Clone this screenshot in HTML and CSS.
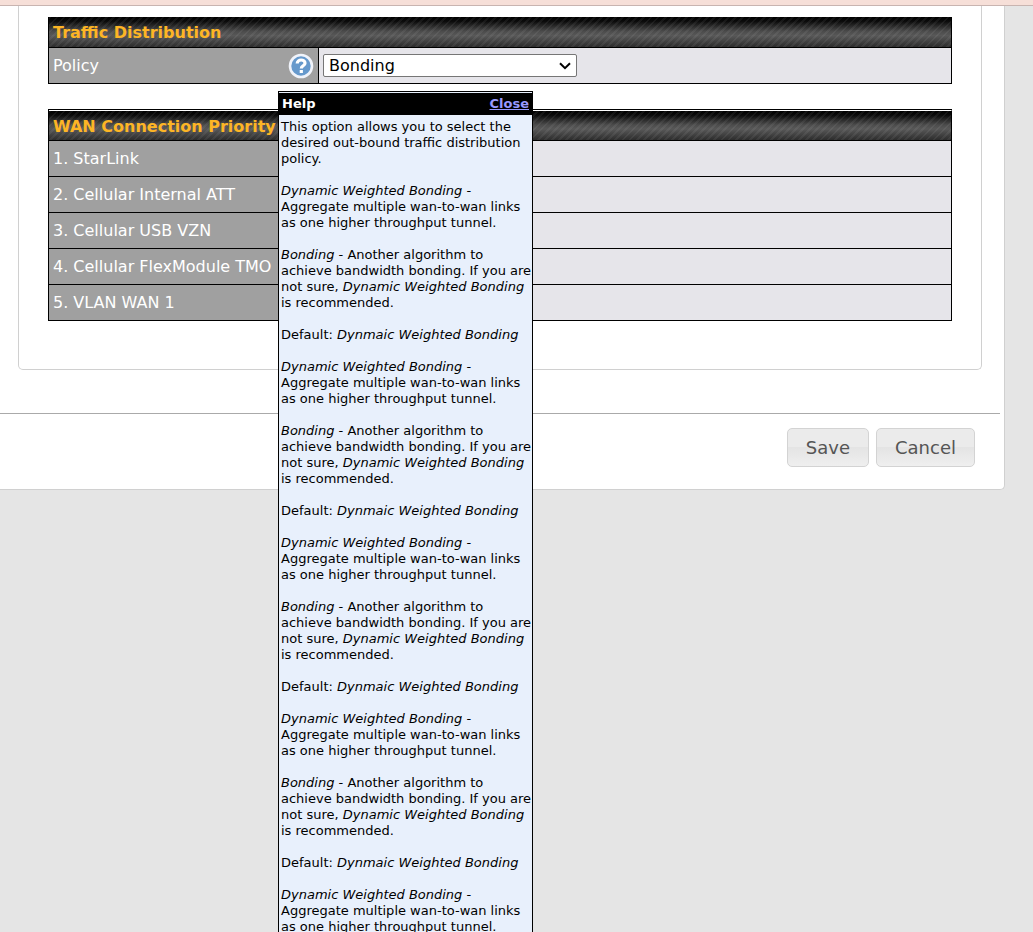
FILE: index.html
```html
<!DOCTYPE html>
<html lang="en">
  <head>
    <meta charset="UTF-8" />
    <meta name="viewport" content="width=device-width, initial-scale=1.0" />
    <title>Traffic Distribution</title>
    <link rel="stylesheet" href="styles.css">
  </head>
  <body>
    <div class="notice"></div>
    <form class="panel">
      <div class="box">
        <table class="settings">
          <colgroup>
            <col class="col-name">
            <col>
          </colgroup>
          <thead>
            <tr>
              <th colspan="2">Traffic Distribution</th>
            </tr>
          </thead>
          <tbody>
            <tr>
              <td class="name">
                <div class="name-row">
                  <label for="policy">Policy</label>
                  <div class="help">
                    <button type="button" class="help-btn" aria-label="Help">
                      <svg width="26" height="26" viewBox="0 0 26 26">
                        <circle cx="13" cy="13" r="11" fill="#6699cc" stroke="#f0f3fa" stroke-width="2.6" />
                        <path d="M9.2 10.6C9.2 5.9 17 5.9 17 10.2C17 12.9 13.3 12.6 13.3 15.4" fill="none" stroke="#fff" stroke-width="3.2" />
                        <rect x="11.7" y="17" width="3.2" height="3" fill="#fff" />
                      </svg>
                    </button>
                    <div class="popup">
                      <div class="popup-head">
                        <span>Help</span>
                        <a href="#">Close</a>
                      </div>
                      <div class="popup-body">
                        <p>This option allows you to select the<br>desired out-bound traffic distribution<br>policy.</p>
                        <p><i>Dynamic Weighted Bonding</i> -<br>Aggregate multiple wan-to-wan links<br>as one higher throughput tunnel.</p>
                        <p><i>Bonding</i> - Another algorithm to<br>achieve bandwidth bonding. If you are<br>not sure, <i>Dynamic Weighted Bonding</i><br>is recommended.</p>
                        <p>Default: <i>Dynmaic Weighted Bonding</i></p>
                        <p><i>Dynamic Weighted Bonding</i> -<br>Aggregate multiple wan-to-wan links<br>as one higher throughput tunnel.</p>
                        <p><i>Bonding</i> - Another algorithm to<br>achieve bandwidth bonding. If you are<br>not sure, <i>Dynamic Weighted Bonding</i><br>is recommended.</p>
                        <p>Default: <i>Dynmaic Weighted Bonding</i></p>
                        <p><i>Dynamic Weighted Bonding</i> -<br>Aggregate multiple wan-to-wan links<br>as one higher throughput tunnel.</p>
                        <p><i>Bonding</i> - Another algorithm to<br>achieve bandwidth bonding. If you are<br>not sure, <i>Dynamic Weighted Bonding</i><br>is recommended.</p>
                        <p>Default: <i>Dynmaic Weighted Bonding</i></p>
                        <p><i>Dynamic Weighted Bonding</i> -<br>Aggregate multiple wan-to-wan links<br>as one higher throughput tunnel.</p>
                        <p><i>Bonding</i> - Another algorithm to<br>achieve bandwidth bonding. If you are<br>not sure, <i>Dynamic Weighted Bonding</i><br>is recommended.</p>
                        <p>Default: <i>Dynmaic Weighted Bonding</i></p>
                        <p><i>Dynamic Weighted Bonding</i> -<br>Aggregate multiple wan-to-wan links<br>as one higher throughput tunnel.</p>
                      </div>
                    </div>
                  </div>
                </div>
              </td>
              <td class="value">
                <div class="select">
                  <select id="policy">
                    <option>Bonding</option>
                    <option>Dynamic Weighted Bonding</option>
                  </select>
                  <svg class="arrow" width="12" height="8" viewBox="0 0 12 8">
                    <path d="M1 1.2L6 6.2L11 1.2" fill="none" stroke="#000" stroke-width="2" />
                  </svg>
                </div>
              </td>
            </tr>
          </tbody>
        </table>

        <table class="settings priority">
          <colgroup>
            <col class="col-name">
            <col>
          </colgroup>
          <thead>
            <tr>
              <th colspan="2">WAN Connection Priority</th>
            </tr>
          </thead>
          <tbody>
            <tr><td class="name">1. StarLink</td><td class="value"></td></tr>
            <tr><td class="name">2. Cellular Internal ATT</td><td class="value"></td></tr>
            <tr><td class="name">3. Cellular USB VZN</td><td class="value"></td></tr>
            <tr><td class="name">4. Cellular FlexModule TMO</td><td class="value"></td></tr>
            <tr><td class="name">5. VLAN WAN 1</td><td class="value"></td></tr>
          </tbody>
        </table>
      </div>
      <div class="actions">
        <button type="button" class="btn">Save</button>
        <button type="button" class="btn">Cancel</button>
      </div>
    </form>
  </body>
</html>
```
FILE: styles.css
```css
* {
  box-sizing: border-box;
  margin: 0;
  padding: 0;
}
html,
body {
  height: 100%;
  overflow: hidden;
}
body {
  background: #e5e5e5;
  font-family: Verdana, "DejaVu Sans", sans-serif;
  font-size: 16px;
}
.notice {
  height: 6px;
  background: #f6dfd8;
  border-bottom: 1px solid #c8b4b0;
}
.panel {
  margin-right: 28px;
  background: #fff;
  border: 1px solid #d0d0d0;
  border-width: 0 1px 1px 0;
  border-radius: 0 0 5px 0;
}
.box {
  margin: 0 22px 0 18px;
  padding: 11px 29px 48px;
  border: 1px solid #d0d0d0;
  border-top: 0;
  border-radius: 0 0 5px 5px;
}

/* tables */
.settings {
  width: 100%;
  table-layout: fixed;
  border-collapse: separate;
  border-spacing: 0;
  border-left: 1px solid #000;
}
.col-name {
  width: 269px;
}
.settings th {
  height: 31px;
  padding: 1px 4px 0;
  border-right: 1px solid #000;
  border-bottom: 1px solid #000;
  background:
    repeating-linear-gradient(135deg, rgba(255, 255, 255, 0.06) 0 2px, transparent 2px 5px),
    linear-gradient(#000 0%, #0c0c0c 15%, #4c4c4c 48%, #585858 62%, #2c2c2c 100%);
  color: #fdb525;
  font-weight: bold;
  text-align: left;
}
.settings td {
  height: 36px;
  padding: 0 4px;
  border-bottom: 1px solid #000;
}
.settings .name {
  background: #a0a0a0;
  color: #fff;
}
.settings .value {
  border-left: 1px solid #000;
  border-right: 1px solid #000;
  background: #e6e5ea;
}
.priority {
  margin-top: 25px;
  border-top: 1px solid #000;
}
.priority thead th {
  border-top: 1px solid #fff;
  background-clip: padding-box;
}
.name-row {
  display: flex;
  align-items: center;
  justify-content: space-between;
}

/* help */
.help {
  position: relative;
  width: 26px;
  height: 26px;
}
.help-btn {
  display: block;
  border: 0;
  background: none;
  cursor: pointer;
}
.help-btn svg {
  display: block;
}
.popup {
  position: absolute;
  top: 38px;
  left: -10px;
  z-index: 1;
  width: 255px;
  padding-top: 1px;
  border: 1px solid #000;
  background: #e8f0fc;
  color: #000;
  font-size: 13px;
  line-height: 16px;
  white-space: nowrap;
}
.popup-head {
  display: flex;
  justify-content: space-between;
  padding: 3px;
  background: #000;
  color: #fff;
  font-weight: bold;
}
.popup-head a {
  color: #9999ff;
}
.popup-body {
  padding: 4px 0 4px 2px;
}
.popup-body p {
  margin-bottom: 16px;
}

/* controls */
.select {
  position: relative;
  width: 254px;
}
.select select {
  display: block;
  width: 100%;
  height: 23px;
  padding: 0 5px;
  appearance: none;
  border: 1px solid #767676;
  border-radius: 2px;
  background: #fff;
  color: #000;
  font: inherit;
}
.arrow {
  position: absolute;
  top: 8px;
  right: 6px;
  pointer-events: none;
}
.actions {
  display: flex;
  justify-content: flex-end;
  gap: 7px;
  margin: 43px 4px 0 0;
  padding: 14px 25px 22px;
  border-top: 1px solid #aaa;
}
.btn {
  height: 39px;
  padding: 0 18px;
  border: 1px solid #d3d3d3;
  border-radius: 5px;
  background: linear-gradient(#ebebeb 0%, #ebebeb 48%, #e4e4e4 50%, #efefef 100%);
  color: #555;
  font-family: inherit;
  font-size: 18px;
  cursor: pointer;
}
```
